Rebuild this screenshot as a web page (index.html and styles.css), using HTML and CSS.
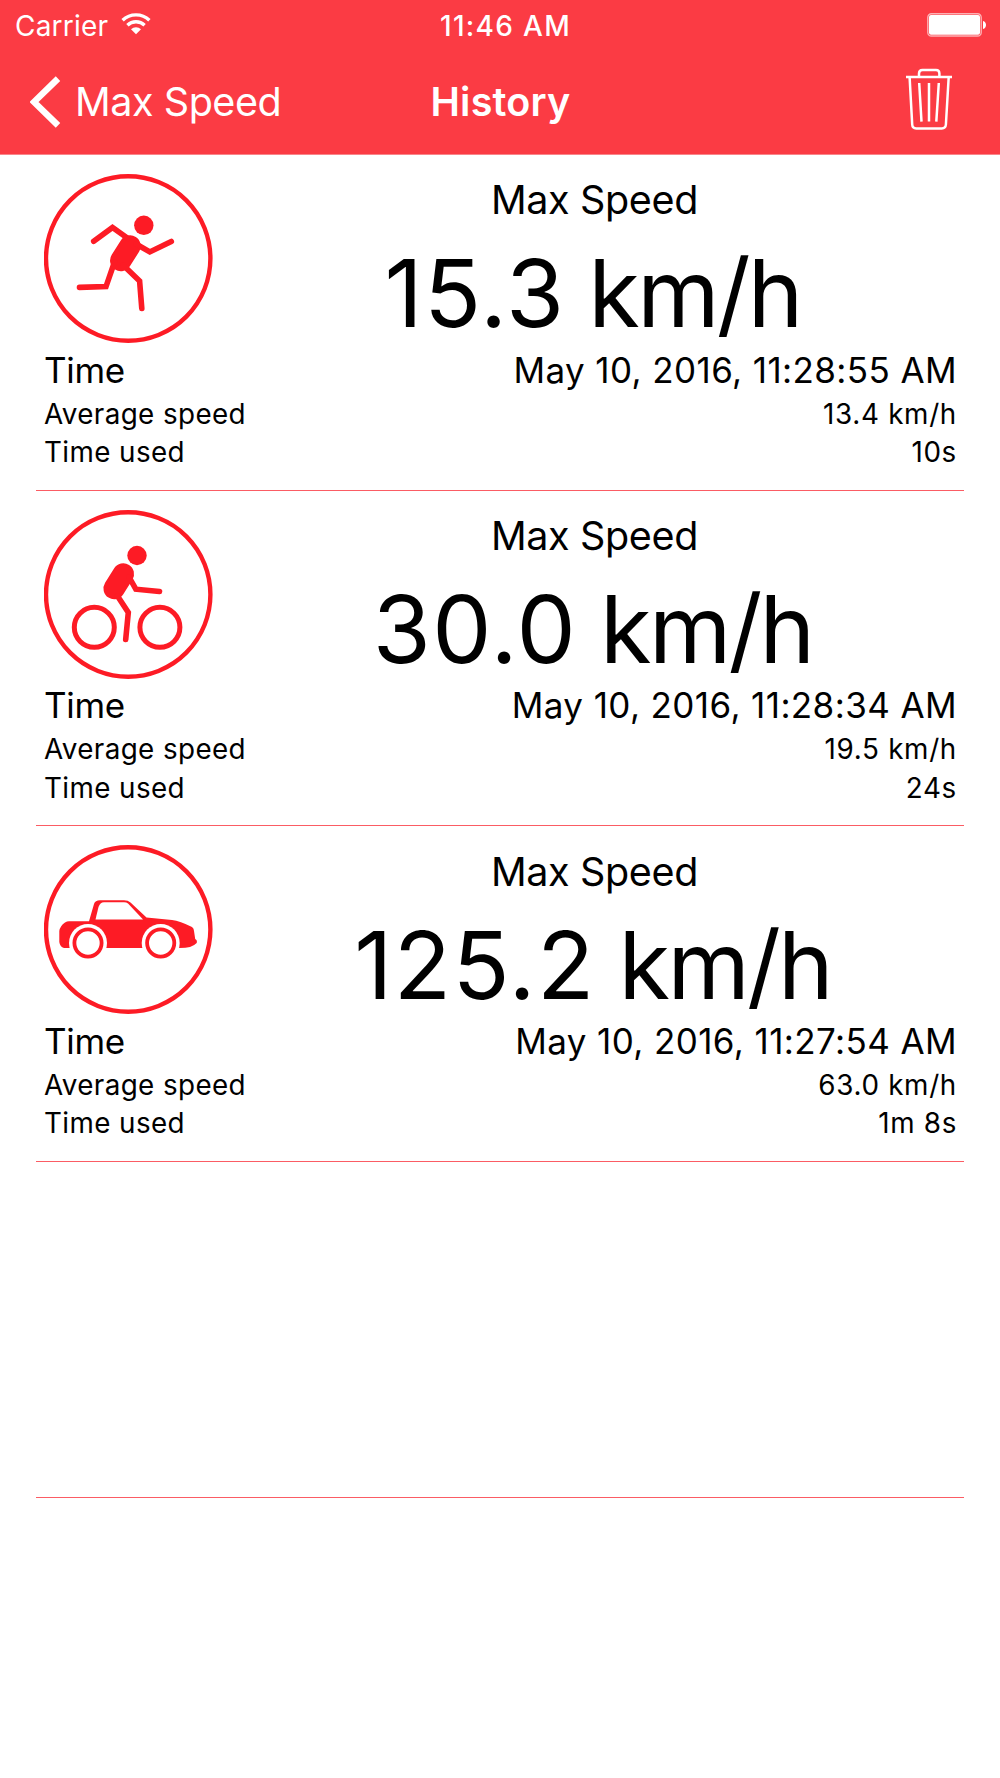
FILE: index.html
```
<!DOCTYPE html>
<html lang="en">
<head>
  <meta charset="UTF-8">
  <meta name="viewport" content="width=device-width, initial-scale=1.0">
  <title>History</title>
  <link rel="stylesheet" href="styles.css">
</head>
<body>
  <header class="header">
    <div class="status-bar">
      <div class="carrier">
        <span>Carrier</span>
        <svg class="wifi" width="30" height="22" viewBox="0 0 30 22">
          <path d="M1.6 7.2A19.4 19.4 0 0 1 28.4 7.2" fill="none" stroke="#fff" stroke-width="3.4"/>
          <path d="M6.4 12.2A12.4 12.4 0 0 1 23.6 12.2" fill="none" stroke="#fff" stroke-width="3.3"/>
          <path d="M10 16.2A7.2 7.2 0 0 1 20 16.2L15 21.3Z" fill="#fff"/>
        </svg>
      </div>
      <div class="clock">11:46 AM</div>
      <svg class="battery" width="60" height="24" viewBox="0 0 60 24">
        <rect x="0.8" y="0.8" width="53.4" height="22.2" rx="3.6" fill="none" stroke="#fff" stroke-opacity="0.6" stroke-width="1.4"/>
        <rect x="2" y="2" width="51" height="19.8" rx="2" fill="#fff"/>
        <path d="M56 8C60 9 60 15 56 16Z" fill="#fff"/>
      </svg>
    </div>
    <nav class="nav-bar">
      <a class="back" href="#">
        <svg width="32" height="52" viewBox="0 0 32 52">
          <path d="M28 2.6L4 26L28 49.4" fill="none" stroke="#fff" stroke-width="6.4"/>
        </svg>
        <span>Max Speed</span>
      </a>
      <h1 class="title">History</h1>
      <a class="trash" href="#">
        <svg width="48" height="64" viewBox="0 0 48 64" fill="none" stroke="#fff" stroke-width="2.5">
          <path d="M1 10H47"/>
          <path d="M14 9V6.5Q14 3 17.5 3H31Q34.4 3 34.4 6.5V9"/>
          <path d="M4.6 10L7.2 57.5Q7.4 61.4 11.2 61.4H36.8Q40.6 61.4 40.9 57.5L43.7 10"/>
          <path d="M14.2 16L16.5 54.6M24 16V54.6M33.8 16L31.3 54.6"/>
        </svg>
      </a>
    </nav>
  </header>

  <main class="history">
    <section class="item">
      <div class="top">
        <svg class="activity" viewBox="0 0 169 169">
          <circle cx="84.2" cy="84.5" r="82.2" fill="none" stroke="#fd1b25" stroke-width="4.4"/>
          <circle cx="99.8" cy="51.3" r="9.7" fill="#fd1b25"/>
          <path d="M86 72L76.8 86.5" stroke="#fd1b25" stroke-width="21.5" stroke-linecap="round"/>
          <g fill="none" stroke="#fd1b25" stroke-width="5.6" stroke-linecap="round">
            <path d="M84 64.5L68.5 53.5L49.7 67.3"/>
            <path d="M92 70L105.8 77.9L127.3 67.4"/>
            <path d="M70.5 88L62 112.6L35.5 113.4"/>
            <path d="M79 91L95.6 107L97.8 134.5"/>
          </g>
        </svg>
        <div class="max">
          <h2>Max Speed</h2>
          <p class="speed">15.3 <span>km/h</span></p>
        </div>
      </div>
      <div class="row time"><span>Time</span><span>May 10, 2016, 11:28:55 AM</span></div>
      <div class="row"><span>Average speed</span><span>13.4 km/h</span></div>
      <div class="row"><span>Time used</span><span>10s</span></div>
    </section>

    <section class="item">
      <div class="top">
        <svg class="activity" viewBox="0 0 169 169">
          <circle cx="84.2" cy="84.5" r="82.2" fill="none" stroke="#fd1b25" stroke-width="4.4"/>
          <circle cx="93" cy="45.5" r="9.7" fill="#fd1b25"/>
          <path d="M79.3 64L70.2 78.5" stroke="#fd1b25" stroke-width="21.5" stroke-linecap="round"/>
          <g fill="none" stroke="#fd1b25" stroke-width="5.6" stroke-linecap="round">
            <path d="M85 67L91.8 79.2L115.5 81.5"/>
            <path d="M73.5 86L84.3 102.5L81.7 129.5"/>
            <circle cx="50.3" cy="117.3" r="20" stroke-width="5"/>
            <circle cx="115.9" cy="117.3" r="20" stroke-width="5"/>
          </g>
        </svg>
        <div class="max">
          <h2>Max Speed</h2>
          <p class="speed">30.0 <span>km/h</span></p>
        </div>
      </div>
      <div class="row time"><span>Time</span><span>May 10, 2016, 11:28:34 AM</span></div>
      <div class="row"><span>Average speed</span><span>19.5 km/h</span></div>
      <div class="row"><span>Time used</span><span>24s</span></div>
    </section>

    <section class="item">
      <div class="top">
        <svg class="activity" viewBox="0 0 169 169">
          <circle cx="84.2" cy="84.5" r="82.2" fill="none" stroke="#fd1b25" stroke-width="4.4"/>
          <path d="M15.3 97V86Q16 81 21 77.5Q23 76.3 25 76.3H45L50 59Q51.2 55.3 56 55.3H80Q84 55.3 86.5 57.5L102.5 72.5L128 75Q136 76 148 82Q150 83.5 150 86L151.2 94Q153.5 95 152.7 98Q151 100 146 102Q142 103 135.5 103H20Q16 102 15.3 97Z" fill="#fd1b25"/>
          <path d="M51.5 74.5L54.5 62Q56 57.2 60 57.2H80Q82.5 57.2 84 58.6L99 74.5Z" fill="#fff"/>
          <g fill="#fff">
            <circle cx="44" cy="98" r="19"/>
            <circle cx="116.7" cy="98" r="19"/>
          </g>
          <g fill="#fff" stroke="#fd1b25" stroke-width="3.8">
            <circle cx="44" cy="98" r="13.6"/>
            <circle cx="116.7" cy="98" r="13.6"/>
          </g>
        </svg>
        <div class="max">
          <h2>Max Speed</h2>
          <p class="speed">125.2 <span>km/h</span></p>
        </div>
      </div>
      <div class="row time"><span>Time</span><span>May 10, 2016, 11:27:54 AM</span></div>
      <div class="row"><span>Average speed</span><span>63.0 km/h</span></div>
      <div class="row"><span>Time used</span><span>1m 8s</span></div>
    </section>

    <section class="item"></section>
  </main>
</body>
</html>
```
FILE: styles.css
```
* {
  box-sizing: border-box;
}

body {
  margin: 0;
  background-color: #fff;
  color: #000;
  font-family: Inter, "Liberation Sans", sans-serif;
}

.header {
  height: 155px;
  background-color: #fb3b44;
  color: #fff;
  border-bottom: 1px solid #f9858a;
}

.status-bar {
  display: grid;
  grid-template-columns: 1fr auto 1fr;
  align-items: center;
  height: 51px;
  padding: 0 13px 0 15px;
  font-size: 28px;
}

.carrier {
  display: flex;
  align-items: center;
  gap: 13px;
  letter-spacing: 0.2px;
}

.wifi {
  margin-bottom: 4px;
}

.clock {
  font-weight: 500;
  letter-spacing: 1.3px;
  padding-left: 9px;
}

.battery {
  justify-self: end;
  margin-bottom: 1px;
}

.nav-bar {
  display: grid;
  grid-template-columns: 1fr auto 1fr;
  align-items: center;
  height: 101px;
  padding: 0 47px 0 30px;
}

.nav-bar a {
  color: #fff;
  text-decoration: none;
}

.back {
  display: flex;
  align-items: center;
  gap: 13px;
  font-size: 39.5px;
  letter-spacing: -0.45px;
}

.title {
  margin: 0;
  padding-left: 18px;
  font-size: 39.5px;
  font-weight: 600;
  letter-spacing: 0.2px;
}

.trash {
  justify-self: end;
  height: 64px;
  margin-bottom: 6px;
}

.item {
  height: 335.7px;
  margin: 0 36px;
  padding: 19px 7px 0 8px;
  border-bottom: 1px solid #fb5c64;
}

.top {
  display: flex;
  height: 169px;
}

.activity {
  width: 169px;
  height: 169px;
}

.max {
  flex: 1;
  padding: 1.4px 0 0 19px;
  text-align: center;
}

.max h2 {
  margin: 0 0 20.8px;
  font-size: 39.5px;
  font-weight: 400;
  line-height: 50px;
  letter-spacing: -0.35px;
}

.speed {
  margin: 0 4px 0 0;
  font-size: 94px;
  line-height: 94px;
  letter-spacing: 1.4px;
  word-spacing: -5px;
}

/* the unit is set tighter than the digits */
.speed span {
  letter-spacing: -2.8px;
}

.row {
  display: flex;
  justify-content: space-between;
  font-size: 27.8px;
  line-height: 38.3px;
  letter-spacing: 0.7px;
}

.row span:first-child {
  letter-spacing: 0.4px;
}

.time {
  margin: 5.6px 0 4.2px;
  font-size: 35px;
  line-height: 42px;
  letter-spacing: 0.4px;
}

.time span:first-child {
  letter-spacing: -0.3px;
}
```
